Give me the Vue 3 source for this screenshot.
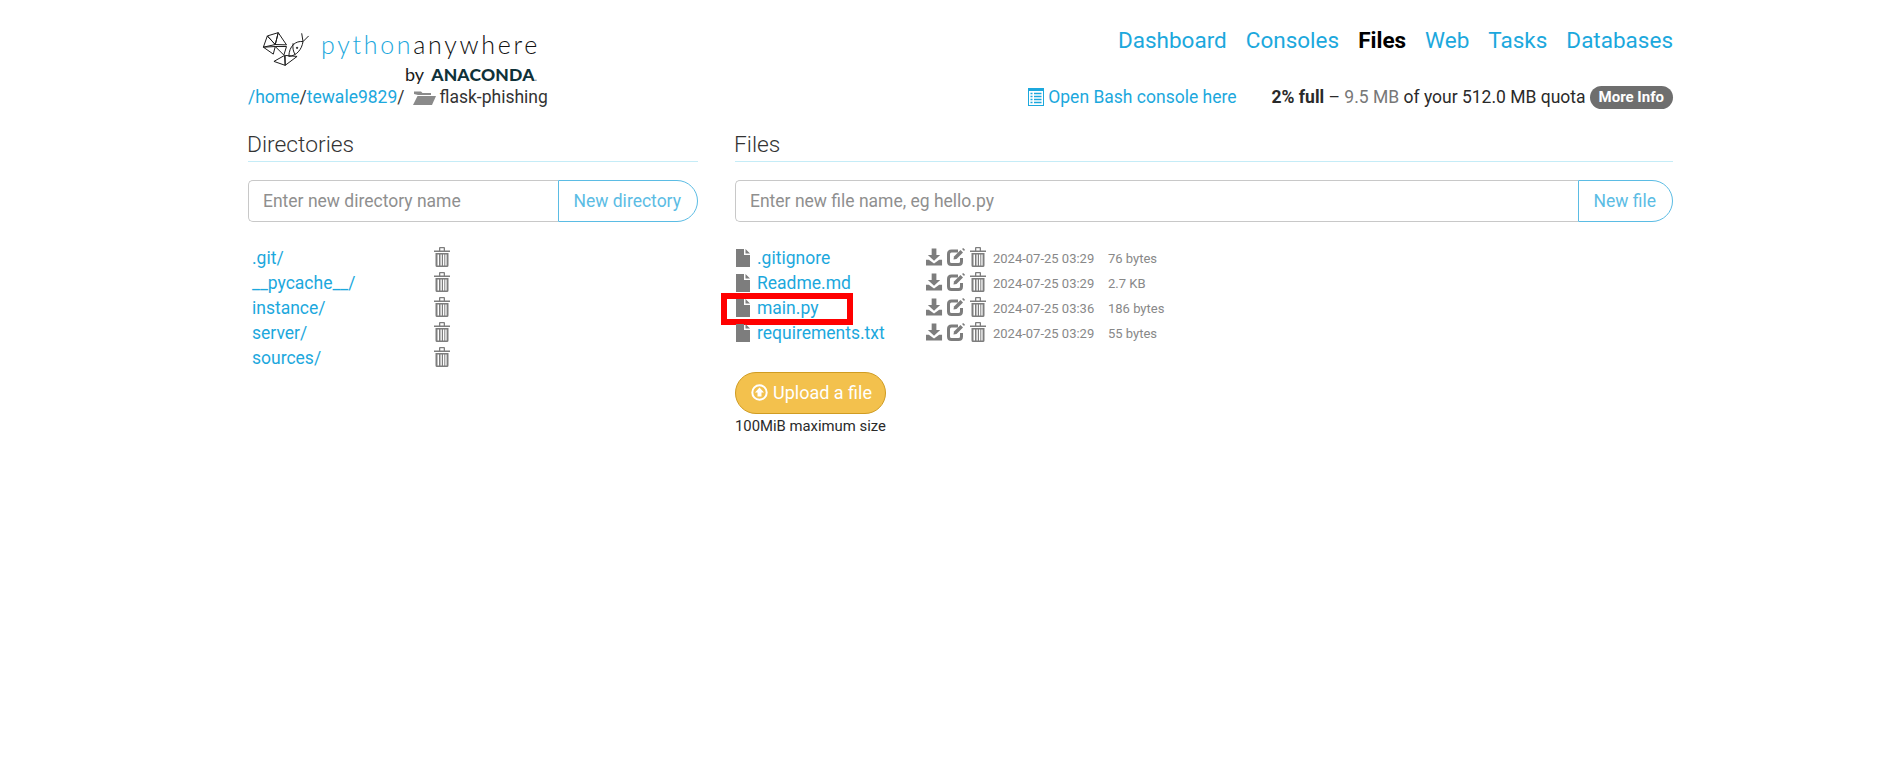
<script setup>
const directories = ['.git/', '__pycache__/', 'instance/', 'server/', 'sources/']
const files = [
  { name: '.gitignore', date: '2024-07-25 03:29', size: '76 bytes' },
  { name: 'Readme.md', date: '2024-07-25 03:29', size: '2.7 KB' },
  { name: 'main.py', date: '2024-07-25 03:36', size: '186 bytes', marked: true },
  { name: 'requirements.txt', date: '2024-07-25 03:29', size: '55 bytes' },
]
const navItems = ['Dashboard', 'Consoles', 'Files', 'Web', 'Tasks', 'Databases']
</script>

<template>
  <div class="page">
    <header class="top">
      <div class="logo">
        <div class="logo-main">
          <svg class="logo-mark" width="53" height="38" viewBox="60 60 160 115" fill="none" stroke="#1a1a1a" stroke-width="3" stroke-linejoin="round">
            <path d="M82 78 L115 68 L106 104 Z M70 112 L82 78 L106 104 Z M115 68 L140 105 L106 104 Z" />
            <path d="M70 112 L100 133 L106 110 Z M106 110 L140 110 L132 136 Z" />
            <path d="M102 155 L134 137 L136 167 Z M136 167 L172 140 L136 137 Z" />
            <path d="M190 95 C168 92 148 108 147 140 C170 138 186 120 190 95 Z M160 100 C158 112 160 125 166 134" />
            <path d="M190 95 L186 70 M190 95 L207 78" />
            <circle cx="172" cy="114" r="2" fill="#1a1a1a" />
          </svg>
          <span class="logo-text"><span class="logo-python">python</span><span class="logo-anywhere">anywhere</span></span>
        </div>
        <div class="logo-by"><span>by</span><span class="anaconda">ANACONDA<small>.</small></span></div>
      </div>
      <nav class="nav">
        <a v-for="item in navItems" :key="item" :class="{ current: item === 'Files' }">{{ item }}</a>
      </nav>
    </header>

    <div class="crumbs">
      <div class="path">
        <a>/home</a>/<a>tewale9829</a>/
        <svg class="folder" width="23" height="15" viewBox="0 0 23 15"><path d="M1 4 V1.5 H8 L9.5 3 H18 V5 H5 Z" fill="#8a8a8a"/><path d="M4.5 6 H23 L19 15 H0 Z" fill="#8a8a8a"/></svg>
        <span class="folder-name">flask-phishing</span>
      </div>
      <div class="status">
        <a class="bash">
          <svg width="16" height="18" viewBox="0 0 16 18"><rect x="0.5" y="0.5" width="15" height="17" fill="none" stroke="#1ca8dd"/><rect x="0" y="0" width="16" height="3" fill="#1ca8dd"/><path d="M2.5 5.5h2M6 5.5h7.5M2.5 8.5h2M6 8.5h7.5M2.5 11.5h2M6 11.5h7.5M2.5 14.5h2M6 14.5h7.5" stroke="#1ca8dd" stroke-width="1.6"/></svg>
          Open Bash console here
        </a>
        <span class="quota"><b>2% full</b> – <span class="used">9.5 MB</span> of your 512.0 MB quota</span>
        <span class="badge">More Info</span>
      </div>
    </div>

    <main class="columns">
      <section class="col-dirs">
        <h2>Directories</h2>
        <div class="entry">
          <div class="fake-input">Enter new directory name</div>
          <div class="entry-btn">New directory</div>
        </div>
        <ul class="listing dirs">
          <li v-for="dir in directories" :key="dir">
            <a class="dir-name">{{ dir }}</a>
            <svg class="trash" width="16" height="20" viewBox="0 0 16 20"><use href="#trash-icon" /></svg>
          </li>
        </ul>
      </section>

      <section class="col-files">
        <h2>Files</h2>
        <div class="entry">
          <div class="fake-input">Enter new file name, eg hello.py</div>
          <div class="entry-btn">New file</div>
        </div>
        <ul class="listing files">
          <li v-for="file in files" :key="file.name">
            <svg class="file-icon" width="14" height="18" viewBox="0 0 14 18"><path d="M0 0 H8 V6 H14 V18 H0 Z M9.5 0 L14 4.5 H9.5 Z" fill="#7d7d7d"/></svg>
            <a class="file-name">{{ file.name }}</a>
            <span class="actions">
              <svg width="17" height="18" viewBox="0 0 18 18"><path d="M6 0 H11 V7 H15 L8.5 13 L2 7 H6 Z" fill="#7d7d7d"/><path d="M0 12 H3 L8.5 16 L14 12 H17 V18 H0 Z" fill="#7d7d7d"/></svg>
              <svg width="18" height="18" viewBox="0 0 18 18"><path d="M11 3 H4.5 Q1.5 3 1.5 6 V13.5 Q1.5 16.5 4.5 16.5 H11.5 Q14.5 16.5 14.5 13.5 V10" fill="none" stroke="#7d7d7d" stroke-width="3"/><path d="M7 8.5 L13.5 2 L16 4.5 L9.5 11 L6.5 11.5 Z" fill="#7d7d7d"/><path d="M15 1 L16.2 0 L18 1.8 L17 3 Z" fill="#7d7d7d"/></svg>
              <svg class="trash" width="16" height="20" viewBox="0 0 16 20"><use href="#trash-icon" /></svg>
            </span>
            <span class="date">{{ file.date }}</span>
            <span class="size">{{ file.size }}</span>
            <span v-if="file.marked" class="marker"></span>
          </li>
        </ul>
        <button class="upload">
          <svg width="17" height="17" viewBox="0 0 17 17"><circle cx="8.5" cy="8.5" r="7.2" fill="none" stroke="#fff" stroke-width="2"/><path d="M8.5 3.6 L13 8.5 H10.5 V12.6 H6.5 V8.5 H4 Z" fill="#fff"/></svg>
          Upload a file
        </button>
        <p class="max-size">100MiB maximum size</p>
      </section>
    </main>

    <svg width="0" height="0" class="defs">
      <symbol id="trash-icon" viewBox="0 0 16 20">
        <path d="M0 3.5 H5 V1 Q5 0 6 0 H10 Q11 0 11 1 V3.5 H16 V5 H0 Z M6.3 1.2 V3.5 H9.7 V1.2 Z" fill="#7d7d7d" fill-rule="evenodd"/>
        <path d="M1.5 6 H14.5 V18.5 Q14.5 20 13 20 H3 Q1.5 20 1.5 18.5 Z M3.5 7.5 V18.5 H5 V7.5 Z M6.5 7.5 V18.5 H7.8 V7.5 Z M9 7.5 V18.5 H10.3 V7.5 Z M11.3 7.5 V18.5 H12.6 V7.5 Z" fill="#7d7d7d" fill-rule="evenodd"/>
      </symbol>
    </svg>
  </div>
</template>

<style>
html, body { background: #fff; }
</style>

<style scoped>
.page {
  width: 1425px;
  margin-left: 248px;
  font-family: Roboto, "Liberation Sans", sans-serif;
  font-size: 16px;
  color: #2a2a2a;
}
a { color: #1ca8dd; text-decoration: none; }
.top {
  display: flex;
  justify-content: space-between;
  height: 86px;
}
.logo { padding: 30px 0 0 12px; width: 330px; box-sizing: border-box; }
.logo-main { display: flex; align-items: flex-start; gap: 8px; height: 34px; }
.logo-mark { flex: none; }
.logo-text { font-family: Lato, sans-serif; font-size: 25px; font-weight: 300; letter-spacing: 2.7px; line-height: 28px; color: #111; white-space: nowrap; }
.logo-python { color: #1ca8dd; }
.logo-by { display: flex; gap: 7px; align-items: baseline; margin: 0 0 0 145px; font-size: 18px; line-height: 20px; color: #1a1a1a; font-family: Lato, sans-serif; }
.anaconda { font-weight: 900; font-size: 17.5px; color: #0f3239; letter-spacing: 0.2px; }
.anaconda small { font-size: 9px; color: #888; }
.nav { display: flex; gap: 19px; padding-top: 25px; font-size: 22.5px; line-height: 30px; }
.nav .current { color: #000; font-weight: 700; }
.crumbs { display: flex; justify-content: space-between; align-items: center; height: 22px; }
.path { display: flex; align-items: center; color: #333; font-size: 17.5px; }
.folder { margin: 0 4px 0 8px; }
.status { display: flex; align-items: center; font-size: 17.5px; }
.bash { display: flex; align-items: center; gap: 4px; margin-right: 35px; }
.quota { margin-right: 4px; }
.used { color: #777; }
.badge { background: #6e6e6e; color: #fff; font-size: 15px; font-weight: 700; line-height: 23px; padding: 0 9px; border-radius: 12px; }
.columns { display: flex; gap: 37px; margin-top: 20px; }
.col-dirs { width: 450px; flex: none; }
.col-files { flex: 1; }
h2 {
  margin: 0;
  font-size: 22.8px;
  font-weight: 300;
  line-height: 33px;
  color: #333;
  border-bottom: 1px solid #c5ecf7;
  height: 33px;
  text-indent: -1px;
}
.entry { display: flex; height: 42px; margin-top: 18px; font-size: 17.5px; }
.fake-input {
  flex: 1;
  border: 1px solid #c8c8c8;
  border-right: 0;
  border-radius: 5px 0 0 5px;
  padding: 0 15px 0 14px;
  line-height: 40px;
  color: #8f8f8f;
}
.entry-btn {
  border: 1px solid #5bbce4;
  border-radius: 0 21px 21px 0;
  padding: 0 16px 0 15px;
  line-height: 40px;
  color: #5bbce4;
}
.listing { list-style: none; margin: 23px 0 0; padding: 0; font-size: 17.5px; }
.listing li { display: flex; align-items: center; height: 25px; position: relative; }
.dir-name { width: 182px; margin-left: 4px; }
.trash { margin-bottom: 2px; }
.file-icon { margin-left: 1px; margin-right: 7px; }
.file-name { width: 169px; }
.actions { display: flex; gap: 4px; width: 67px; align-items: center; }
.actions svg { margin-bottom: 2px; }
.actions .trash { margin-left: 1px; }
.date { font-size: 13px; color: #888; width: 115px; margin-top: 1px; }
.size { font-size: 13px; color: #888; margin-top: 1px; }
.marker {
  position: absolute;
  left: -14px;
  top: -2px;
  width: 132px;
  height: 32px;
  box-sizing: border-box;
  border: 6px solid #f00;
}
.upload {
  display: flex;
  align-items: center;
  gap: 5px;
  margin-top: 27px;
  width: 151px;
  height: 42px;
  padding: 0 0 2px 15px;
  background: #f3c14d;
  border: 1px solid #d09c22;
  border-radius: 22px;
  color: #fff;
  font: 400 18px Roboto, sans-serif;
  white-space: nowrap;
}
.max-size { margin: 2px 0 0; font-size: 14.85px; line-height: 20px; }
.defs { position: absolute; }
</style>
